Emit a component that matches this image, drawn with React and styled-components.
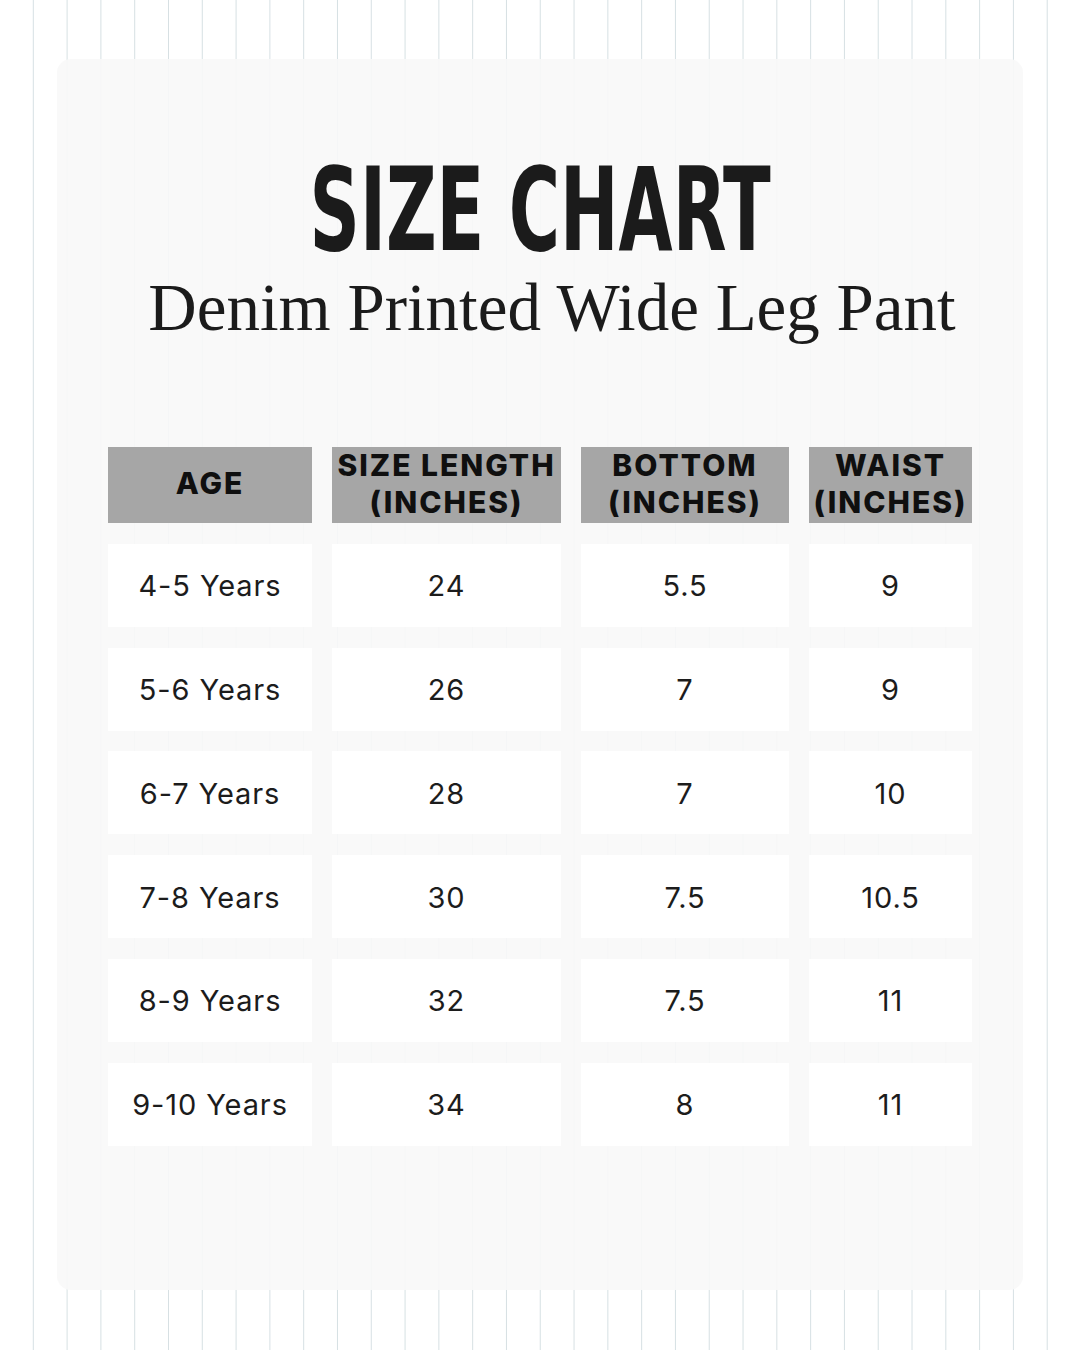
import React from "react";
import styled, { createGlobalStyle } from "styled-components";

const GlobalStyle = createGlobalStyle`
  html, body {
    margin: 0;
    padding: 0;
  }
  body {
    width: 1080px;
    min-height: 1350px;
    background-color: #ffffff;
    background-image: repeating-linear-gradient(
      90deg,
      transparent 0px,
      transparent 32.8px,
      #d6e0e3 32.8px,
      #d6e0e3 33.8px
    );
    background-size: 33.8px 100%;
    background-position: 0 0;
    font-family: Inter, "Liberation Sans", sans-serif;
  }
`;

const Page = styled.div`
  width: 1080px;
  height: 1350px;
  padding: 59px 57px 60px;
  box-sizing: border-box;
`;

const Card = styled.section`
  height: 100%;
  box-sizing: border-box;
  background: rgba(248, 248, 248, 0.9);
  border-radius: 14px;
  padding: 93px 51px 0;
  display: flex;
  flex-direction: column;
  align-items: center;
`;

const Title = styled.h1`
  margin: 0;
  height: 116px;
  font-family: "Liberation Sans Narrow", "DejaVu Sans Condensed", sans-serif;
  font-weight: 700;
  font-size: 116px;
  line-height: 116px;
  color: #1b1b1b;
  letter-spacing: 0;
  transform: scaleX(0.67);
  white-space: nowrap;
`;

const Subtitle = styled.h2`
  margin: 6px 0 0 24px;
  font-family: "Liberation Serif", "DejaVu Serif", serif;
  font-weight: 400;
  font-size: 67px;
  line-height: 67px;
  color: #1b1b1b;
  white-space: nowrap;
`;

const Table = styled.div`
  margin-top: 106px;
  width: 100%;
  display: grid;
  grid-template-columns: 204px 229px 208px 163px;
  grid-template-rows: 76px repeat(6, 83px);
  column-gap: 20px;
  row-gap: 20.8px;
`;

const HeadCell = styled.div`
  background: #a6a6a6;
  display: flex;
  align-items: center;
  justify-content: center;
  text-align: center;
  font-family: Inter, "Liberation Sans", sans-serif;
  font-weight: 800;
  font-size: 30px;
  line-height: 37px;
  letter-spacing: 2px;
  color: #0f0f0f;
  white-space: nowrap;
  padding-bottom: 3px;
  box-sizing: border-box;
`;

const Cell = styled.div`
  background: #ffffff;
  display: flex;
  align-items: center;
  justify-content: center;
  font-family: Inter, "Liberation Sans", sans-serif;
  font-weight: 400;
  font-size: 29px;
  letter-spacing: 0.9px;
  color: #1c1c1c;
  padding-top: 1px;
  box-sizing: border-box;
`;

const headers = [
  ["AGE"],
  ["SIZE LENGTH", "(INCHES)"],
  ["BOTTOM", "(INCHES)"],
  ["WAIST", "(INCHES)"],
];

const rows = [
  ["4-5 Years", "24", "5.5", "9"],
  ["5-6 Years", "26", "7", "9"],
  ["6-7 Years", "28", "7", "10"],
  ["7-8 Years", "30", "7.5", "10.5"],
  ["8-9 Years", "32", "7.5", "11"],
  ["9-10 Years", "34", "8", "11"],
];

const App = () => {
  return (
    <>
      <GlobalStyle />
      <Page>
        <Card>
          <Title>SIZE CHART</Title>
          <Subtitle>Denim Printed Wide Leg Pant</Subtitle>
          <Table>
            {headers.map((lines, i) => (
              <HeadCell key={"h" + i}>
                <div>
                  {lines.map((l) => (
                    <div key={l}>{l}</div>
                  ))}
                </div>
              </HeadCell>
            ))}
            {rows.map((row, r) =>
              row.map((val, c) => <Cell key={r + "-" + c}>{val}</Cell>)
            )}
          </Table>
        </Card>
      </Page>
    </>
  );
};

export default App;
